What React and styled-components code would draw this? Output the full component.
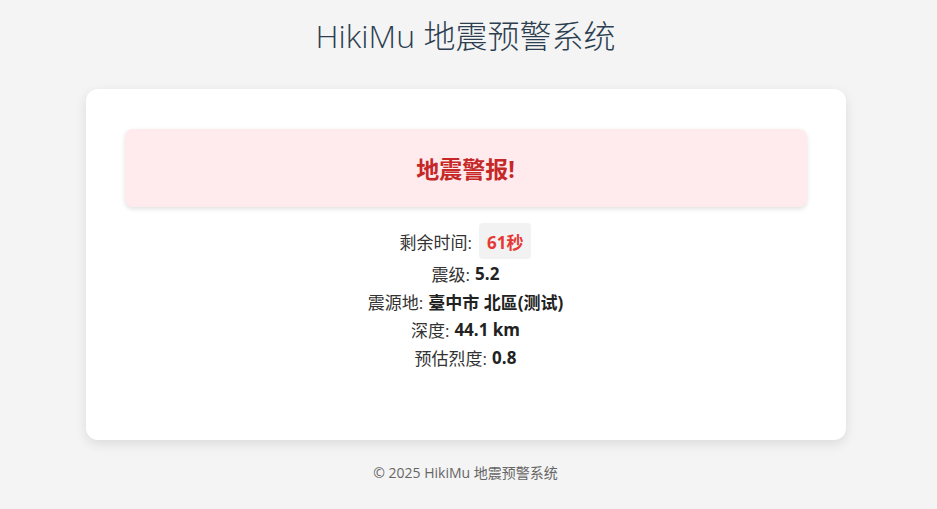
import React from "react"
import styled, { createGlobalStyle } from "styled-components"

const GlobalStyle = createGlobalStyle`
  body {
    margin: 0;
    background: #f4f4f4;
    font-family: "Open Sans", "Noto Sans CJK SC", sans-serif;
    color: #333;
  }
`

const Page = styled.div`
  display: flex;
  flex-direction: column;
  align-items: center;
  padding: 16px 6px 0 0;
`

const Title = styled.h1`
  margin: 0;
  font-size: 32px;
  line-height: 40px;
  font-weight: 300;
  color: #2c3e50;
`

const Card = styled.main`
  box-sizing: border-box;
  margin-top: 33px;
  width: 760px;
  height: 351px;
  background: #fff;
  border-radius: 12px;
  box-shadow: 0 4px 12px rgba(0, 0, 0, 0.1);
  padding: 40px 39px;
`

const Alert = styled.div`
  height: 78px;
  display: flex;
  align-items: center;
  justify-content: center;
  background: #ffebee;
  border-radius: 8px;
  box-shadow: 0 2px 5px rgba(0, 0, 0, 0.12);
  color: #c62828;
  font-size: 23px;
  font-weight: 700;
`

const Info = styled.div`
  margin-top: 16px;
  display: flex;
  flex-direction: column;
  align-items: center;
  font-size: 17px;
`

const Line = styled.div`
  height: ${(p) => (p.$tall ? 36 : 28)}px;
  display: flex;
  align-items: center;
  gap: 5px;
  b {
    font-weight: 700;
    color: #222;
  }
`

const Countdown = styled.span`
  margin-left: 2px;
  padding: 0 8px;
  height: 36px;
  display: inline-flex;
  align-items: center;
  background: #f2f2f2;
  border-radius: 4px;
  color: #e53935;
  font-weight: 700;
`

const Footer = styled.footer`
  margin-top: 22px;
  font-size: 14px;
  color: #666;
`

export default function App() {
  return (
    <Page>
      <GlobalStyle />
      <Title>HikiMu 地震预警系统</Title>
      <Card>
        <Alert>地震警报!</Alert>
        <Info>
          <Line $tall>
            剩余时间: <Countdown>61秒</Countdown>
          </Line>
          <Line>
            震级: <b>5.2</b>
          </Line>
          <Line>
            震源地: <b>臺中市 北區(测试)</b>
          </Line>
          <Line>
            深度: <b>44.1 km</b>
          </Line>
          <Line>
            预估烈度: <b>0.8</b>
          </Line>
        </Info>
      </Card>
      <Footer>© 2025 HikiMu 地震预警系统</Footer>
    </Page>
  )
}
